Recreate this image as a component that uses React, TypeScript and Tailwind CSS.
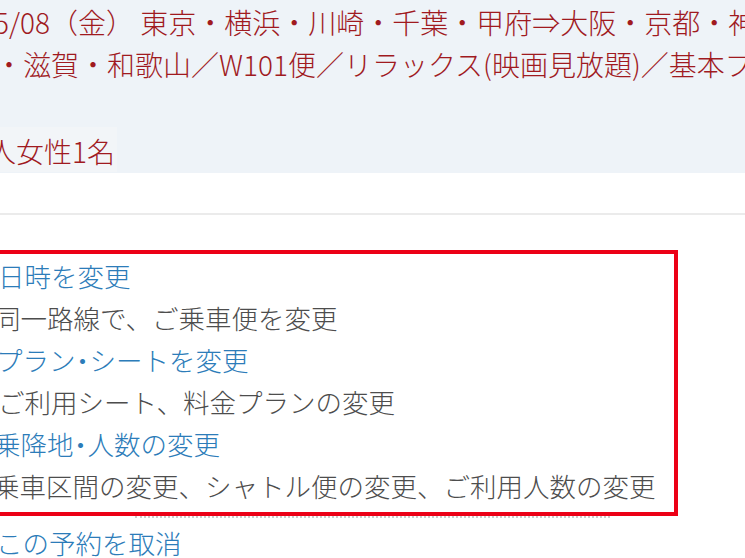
import React from "react";

function Dot() {
  return <span className="inline-flex w-[14px] justify-center">・</span>;
}

export default function App() {
  const font = { fontFamily: '"Noto Sans CJK JP", "Noto Sans", sans-serif' };
  return (
    <div
      className="w-[745px] h-[558px] overflow-hidden bg-white relative font-light"
      style={font}
    >
      <div className="bg-[#eef3f8] h-[173px] text-[28px] leading-[42px] text-[#a01a1f] pt-[1px]">
        <div className="whitespace-nowrap ml-[-6px]">
          5/08（金） 東京・横浜・川崎・千葉・甲府⇒大阪・京都・神戸・奈良
        </div>
        <div className="whitespace-nowrap ml-[-5px]">
          ・滋賀・和歌山／W101便／リラックス(映画見放題)／基本プラン
        </div>
        <div className="h-[42px]"></div>
        <div className="w-[117px] h-[45px] bg-[#f2f5f8] pt-[3px] overflow-hidden">
          <div className="whitespace-nowrap ml-[-40px]">大人女性1名</div>
        </div>
      </div>
      <div className="h-[40px]"></div>
      <div className="h-[2px] bg-[#ebebeb]"></div>
      <div className="h-[35px]"></div>
      <div className="w-[698px] ml-[-20px] border-4 border-[#ec0016] pt-[1px] pb-[5px] text-[26.5px] leading-[42px] whitespace-nowrap">
        <div className="text-[#2c7cb9] ml-[14px]">日時を変更</div>
        <div className="text-[#4d4d4d] ml-[10px]">同一路線で、ご乗車便を変更</div>
        <div className="text-[#2c7cb9] ml-[12px]">
          プラン<Dot />シートを変更
        </div>
        <div className="text-[#4d4d4d] ml-[14px]">ご利用シート、料金プランの変更</div>
        <div className="text-[#2c7cb9] ml-[10px]">
          乗降地<Dot />人数の変更
        </div>
        <div className="text-[#4d4d4d] ml-[9px]">乗車区間の変更、シャトル便の変更、ご利用人数の変更</div>
      </div>
      <div className="ml-[135px] w-[475px] border-t-2 border-dotted border-[#cccccc]"></div>
      <div className="text-[26.5px] leading-[42px] text-[#2c7cb9] mt-[4px] ml-[-4px] whitespace-nowrap">
        この予約を取消
      </div>
    </div>
  );
}
